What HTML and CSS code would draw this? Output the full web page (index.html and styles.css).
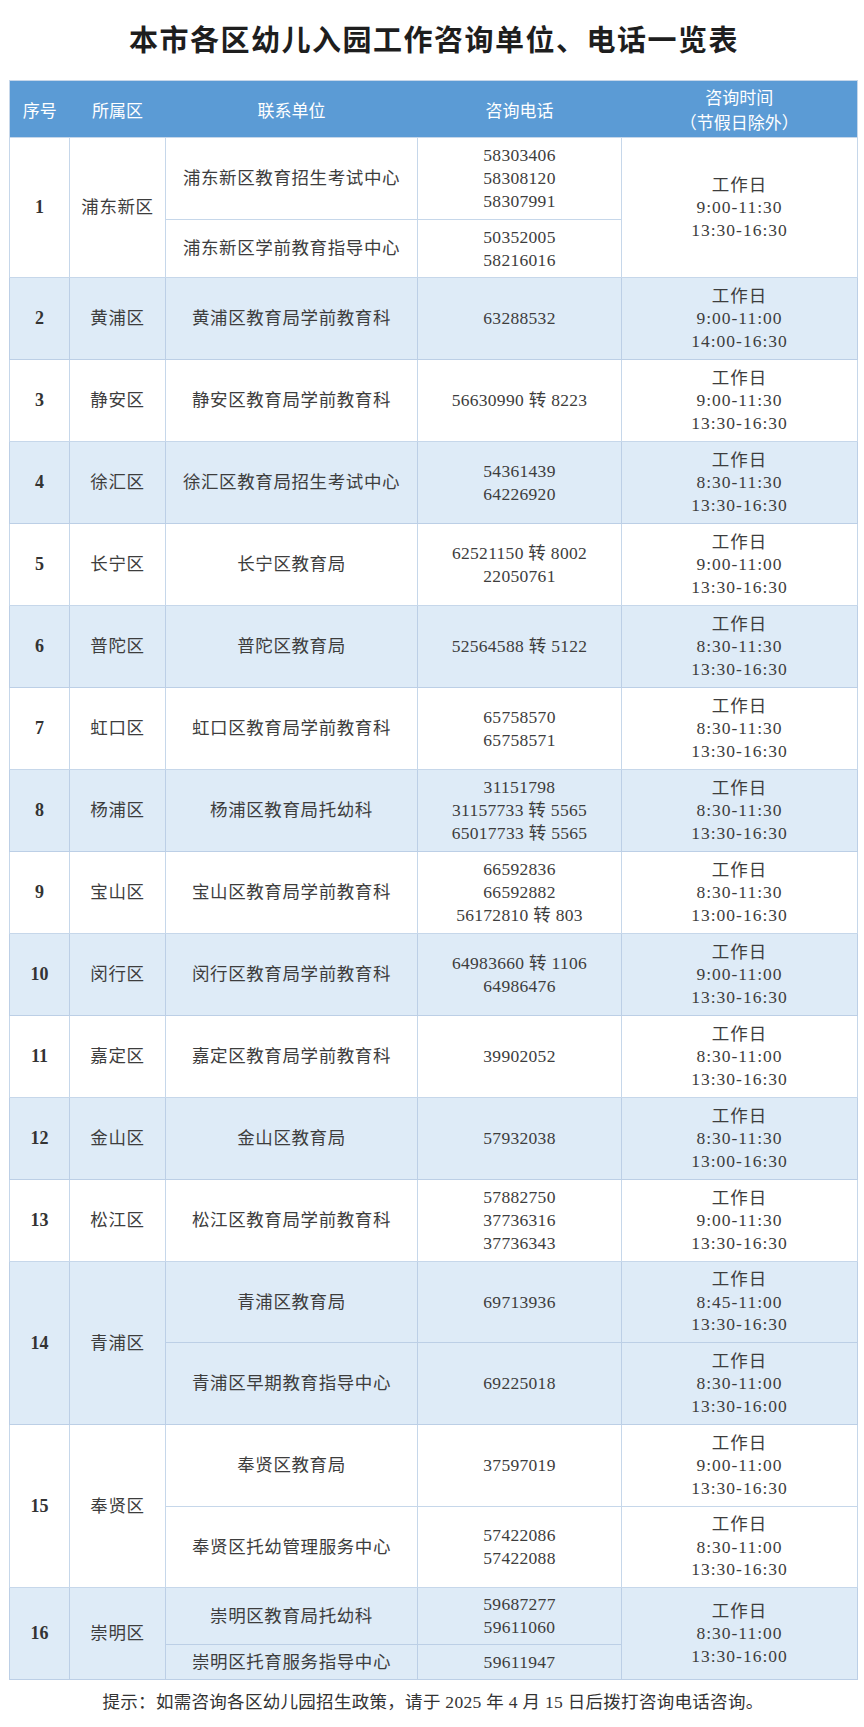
FILE: index.html
```html
<!DOCTYPE html>
<html lang="zh-CN">
<head>
<meta charset="utf-8">
<title>本市各区幼儿入园工作咨询单位、电话一览表</title>
<link rel="stylesheet" href="styles.css">
</head>
<body>
<div class="page">
  <h1 class="title">本市各区幼儿入园工作咨询单位、电话一览表</h1>
  <table class="grid">
    <colgroup>
      <col class="c1"><col class="c2"><col class="c3"><col class="c4"><col class="c5">
    </colgroup>
    <thead>
      <tr class="head">
        <th>序号</th><th>所属区</th><th>联系单位</th><th>咨询电话</th><th>咨询时间<br>（节假日除外）</th>
      </tr>
    </thead>
    <tbody>
      <tr class="h82">
        <td rowspan="2" class="num">1</td><td rowspan="2">浦东新区</td>
        <td>浦东新区教育招生考试中心</td><td class="tel">58303406<br>58308120<br>58307991</td>
        <td rowspan="2" class="time">工作日<br>9:00-11:30<br>13:30-16:30</td>
      </tr>
      <tr class="h58"><td>浦东新区学前教育指导中心</td><td class="tel">50352005<br>58216016</td></tr>

      <tr class="h82 alt"><td class="num">2</td><td>黄浦区</td><td>黄浦区教育局学前教育科</td><td class="tel">63288532</td><td class="time">工作日<br>9:00-11:00<br>14:00-16:30</td></tr>
      <tr class="h82"><td class="num">3</td><td>静安区</td><td>静安区教育局学前教育科</td><td class="tel">56630990 转 8223</td><td class="time">工作日<br>9:00-11:30<br>13:30-16:30</td></tr>
      <tr class="h82 alt"><td class="num">4</td><td>徐汇区</td><td>徐汇区教育局招生考试中心</td><td class="tel">54361439<br>64226920</td><td class="time">工作日<br>8:30-11:30<br>13:30-16:30</td></tr>
      <tr class="h82"><td class="num">5</td><td>长宁区</td><td>长宁区教育局</td><td class="tel">62521150 转 8002<br>22050761</td><td class="time">工作日<br>9:00-11:00<br>13:30-16:30</td></tr>
      <tr class="h82 alt"><td class="num">6</td><td>普陀区</td><td>普陀区教育局</td><td class="tel">52564588 转 5122</td><td class="time">工作日<br>8:30-11:30<br>13:30-16:30</td></tr>
      <tr class="h82"><td class="num">7</td><td>虹口区</td><td>虹口区教育局学前教育科</td><td class="tel">65758570<br>65758571</td><td class="time">工作日<br>8:30-11:30<br>13:30-16:30</td></tr>
      <tr class="h82 alt"><td class="num">8</td><td>杨浦区</td><td>杨浦区教育局托幼科</td><td class="tel">31151798<br>31157733 转 5565<br>65017733 转 5565</td><td class="time">工作日<br>8:30-11:30<br>13:30-16:30</td></tr>
      <tr class="h82"><td class="num">9</td><td>宝山区</td><td>宝山区教育局学前教育科</td><td class="tel">66592836<br>66592882<br>56172810 转 803</td><td class="time">工作日<br>8:30-11:30<br>13:00-16:30</td></tr>
      <tr class="h82 alt"><td class="num">10</td><td>闵行区</td><td>闵行区教育局学前教育科</td><td class="tel">64983660 转 1106<br>64986476</td><td class="time">工作日<br>9:00-11:00<br>13:30-16:30</td></tr>
      <tr class="h82"><td class="num">11</td><td>嘉定区</td><td>嘉定区教育局学前教育科</td><td class="tel">39902052</td><td class="time">工作日<br>8:30-11:00<br>13:30-16:30</td></tr>
      <tr class="h82 alt"><td class="num">12</td><td>金山区</td><td>金山区教育局</td><td class="tel">57932038</td><td class="time">工作日<br>8:30-11:30<br>13:00-16:30</td></tr>
      <tr class="h82"><td class="num">13</td><td>松江区</td><td>松江区教育局学前教育科</td><td class="tel">57882750<br>37736316<br>37736343</td><td class="time">工作日<br>9:00-11:30<br>13:30-16:30</td></tr>

      <tr class="h81 alt">
        <td rowspan="2" class="num">14</td><td rowspan="2">青浦区</td>
        <td>青浦区教育局</td><td class="tel">69713936</td><td class="time">工作日<br>8:45-11:00<br>13:30-16:30</td>
      </tr>
      <tr class="h82 alt"><td>青浦区早期教育指导中心</td><td class="tel">69225018</td><td class="time">工作日<br>8:30-11:00<br>13:30-16:00</td></tr>

      <tr class="h82">
        <td rowspan="2" class="num">15</td><td rowspan="2">奉贤区</td>
        <td>奉贤区教育局</td><td class="tel">37597019</td><td class="time">工作日<br>9:00-11:00<br>13:30-16:30</td>
      </tr>
      <tr class="h81"><td>奉贤区托幼管理服务中心</td><td class="tel">57422086<br>57422088</td><td class="time">工作日<br>8:30-11:00<br>13:30-16:30</td></tr>

      <tr class="h57 alt">
        <td rowspan="2" class="num">16</td><td rowspan="2">崇明区</td>
        <td>崇明区教育局托幼科</td><td class="tel">59687277<br>59611060</td>
        <td rowspan="2" class="time">工作日<br>8:30-11:00<br>13:30-16:00</td>
      </tr>
      <tr class="h35 alt"><td>崇明区托育服务指导中心</td><td class="tel">59611947</td></tr>
    </tbody>
  </table>
  <p class="note">提示：如需咨询各区幼儿园招生政策，请于 2025 年 4 月 15 日后拨打咨询电话咨询。</p>
</div>
</body>
</html>
```

FILE: styles.css
```css
html, body {
  margin: 0;
  padding: 0;
  background: #ffffff;
}

.page {
  width: 864px;
  padding: 0 7px 0 9px;
  box-sizing: border-box;
  font-family: "Liberation Serif", "Noto Sans CJK SC", serif;
  color: #3d3d3d;
}

.title {
  margin: 0;
  height: 80px;
  padding-top: 19px;
  box-sizing: border-box;
  text-align: center;
  font-family: "Noto Sans CJK SC", sans-serif;
  font-size: 29px;
  line-height: 38px;
  font-weight: 700;
  color: #1e1e1e;
  letter-spacing: 1.5px;
  padding-left: 2px;
}

.grid {
  width: 848px;
  border-collapse: collapse;
  table-layout: fixed;
  border: 1px solid #c6d7ea;
}

.c1 { width: 60px; }
.c2 { width: 96px; }
.c3 { width: 252px; }
.c4 { width: 204px; }
.c5 { width: 236px; }

.head th {
  height: 56px;
  padding: 0;
  background: #5b9bd5;
  color: #ffffff;
  font-family: "Noto Sans CJK SC", sans-serif;
  font-weight: 400;
  font-size: 17px;
  line-height: 25px;
  text-align: center;
  vertical-align: middle;
  border: none;
}

.grid td {
  padding: 0;
  border: 1px solid #c6d7ea;
  text-align: center;
  vertical-align: middle;
  font-size: 17.5px;
  line-height: 23px;
  letter-spacing: 0.6px;
}

.grid tr.alt td {
  background: #deebf7;
  border-color: #bccfe6;
}

.grid td.num {
  font-weight: 700;
  font-size: 18px;
  color: #333333;
  letter-spacing: 0;
}

.grid td.tel {
  letter-spacing: 0.3px;
}

.grid td.time {
  letter-spacing: 1px;
  line-height: 22.5px;
}

.h82 td { height: 81px; }
.h81 td { height: 80px; }
.h58 td { height: 57px; }
.h57 td { height: 56px; }
.h35 td { height: 34px; }

.note {
  margin: 0;
  padding-top: 12px;
  text-align: center;
  font-size: 17.5px;
  line-height: 20px;
  color: #333333;
  letter-spacing: 0.3px;
}
```
